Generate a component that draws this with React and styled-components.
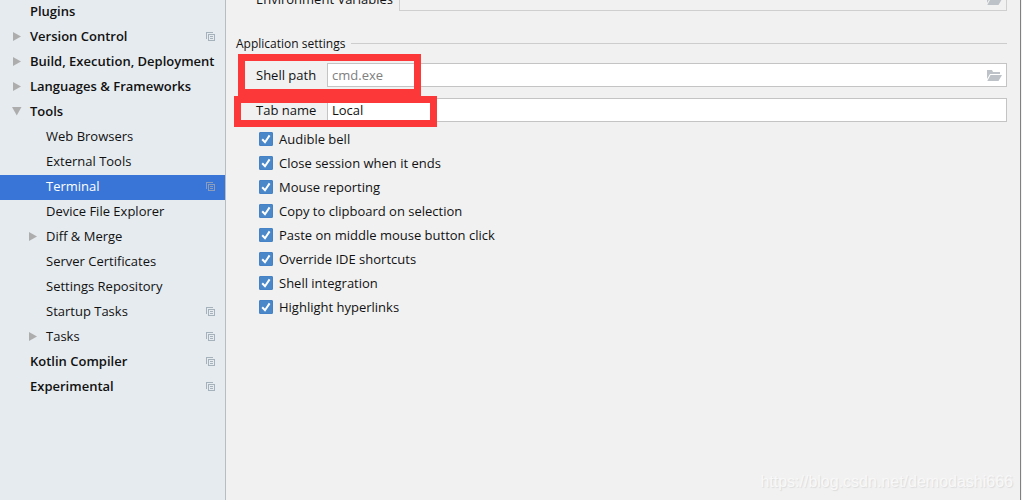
import React, { useState } from "react";
import styled, { createGlobalStyle } from "styled-components";

const GlobalStyle = createGlobalStyle`
  * {
    box-sizing: border-box;
  }
  body {
    margin: 0;
    background: #f1f1f1;
    color: #111;
    font-family: "Open Sans", "Noto Sans", sans-serif;
    font-size: 13px;
  }
  input, button {
    font: inherit;
    color: inherit;
  }
`;

// DATA

const treeItems = [
  { label: "Plugins", level: 0 },
  { label: "Version Control", level: 0, arrow: "right", copy: true },
  { label: "Build, Execution, Deployment", level: 0, arrow: "right" },
  { label: "Languages & Frameworks", level: 0, arrow: "right" },
  { label: "Tools", level: 0, arrow: "down" },
  { label: "Web Browsers", level: 1 },
  { label: "External Tools", level: 1 },
  { label: "Terminal", level: 1, copy: true },
  { label: "Device File Explorer", level: 1 },
  { label: "Diff & Merge", level: 1, arrow: "right" },
  { label: "Server Certificates", level: 1 },
  { label: "Settings Repository", level: 1 },
  { label: "Startup Tasks", level: 1, copy: true },
  { label: "Tasks", level: 1, arrow: "right", copy: true },
  { label: "Kotlin Compiler", level: 0, copy: true },
  { label: "Experimental", level: 0, copy: true }
];

const options = [
  "Audible bell",
  "Close session when it ends",
  "Mouse reporting",
  "Copy to clipboard on selection",
  "Paste on middle mouse button click",
  "Override IDE shortcuts",
  "Shell integration",
  "Highlight hyperlinks"
];

// STYLED COMPONENTS

const Window = styled.div`
  display: flex;
  min-height: 100vh;
  overflow: hidden;
`;

const Sidebar = styled.nav`
  flex: 0 0 226px;
  min-width: 0;
  background: #e6ebef;
  border-right: 1px solid #b9bdc1;
`;

const Tree = styled.ul`
  list-style: none;
  margin: 0;
  padding: 0;
`;

const TreeRow = styled.li`
  display: flex;
  align-items: center;
  height: 25px;
  padding: 0 10px 2px ${props => (props.$level ? 28 : 12)}px;
  background: ${props => (props.$selected ? "#3875d6" : "transparent")};
  color: ${props => (props.$selected ? "#fff" : "#111")};
  font-weight: ${props => (props.$level ? 400 : 600)};
  svg {
    flex: none;
  }
  a {
    flex: 1;
    min-width: 0;
    height: 23px;
    color: inherit;
    text-decoration: none;
    line-height: 22px;
    white-space: nowrap;
  }
`;

const Toggle = styled.span`
  display: flex;
  flex: 0 0 18px;
`;

const Main = styled.main`
  position: relative;
  flex: 1;
  min-width: 0;
  overflow: hidden;
  padding: 0 13px 0 10px;
  border-right: 1px solid #808080;
  margin-right: 1px;
`;

/* the project settings group is scrolled out except for its last row */
const ProjectGroup = styled.section`
  margin-top: -13px;
`;

const FieldRow = styled.div`
  display: flex;
  align-items: center;
  padding-left: 20px;
  & + & {
    margin-top: 11px;
  }
  label {
    flex: 0 0 ${props => props.$labelWidth || 71}px;
    line-height: 24px;
  }
`;

const FieldBox = styled.div`
  display: flex;
  align-items: center;
  flex: 1;
  height: 24px;
  padding: 0 4px;
  border: 1px solid ${props => (props.$disabled ? "#cfcfcf" : "#c4c4c4")};
  background: ${props => (props.$disabled ? "transparent" : "#fff")};
`;

const TextInput = styled.input`
  flex: 1;
  min-width: 0;
  height: 22px;
  padding: 0;
  border: 0;
  outline: 0;
  background: transparent;
  &::placeholder {
    color: #808080;
    opacity: 1;
  }
`;

const BrowseButton = styled.button`
  display: flex;
  padding: 0;
  border: 0;
  background: none;
`;

const GroupTitle = styled.h2`
  display: flex;
  align-items: center;
  gap: 6px;
  margin: 22px 0 9px;
  font-size: 12px;
  font-weight: 400;
  line-height: 21px;
  &::after {
    content: "";
    flex: 1;
    height: 1px;
    background: #cdcdcd;
  }
`;

const OptionList = styled.div`
  display: flex;
  flex-direction: column;
  padding: 5px 0 0 23px;
`;

const Option = styled.label`
  display: flex;
  align-items: center;
  gap: 6px;
  height: 24px;
`;

const CheckBox = styled.span`
  display: grid;
  width: 14px;
  height: 14px;
  input,
  svg {
    grid-area: 1 / 1;
  }
  input {
    appearance: none;
    width: 14px;
    height: 14px;
    margin: 0;
    border: 1px solid #b0b0b0;
    border-radius: 1px;
    background: #fff;
  }
  input:checked {
    border-color: #4583c6;
    background: #4a88c9;
  }
  input:not(:checked) + svg {
    display: none;
  }
  svg {
    pointer-events: none;
    z-index: 1;
  }
`;

const Marker = styled.div`
  position: absolute;
  left: ${props => props.$left}px;
  top: ${props => props.$top}px;
  width: ${props => props.$width}px;
  height: ${props => props.$height}px;
  border: 7px solid #fd3838;
  pointer-events: none;
`;

const Watermark = styled.div`
  position: absolute;
  right: 7px;
  bottom: 8px;
  color: #f8f8f8;
  font-family: "Liberation Sans", Arial, sans-serif;
  font-size: 16px;
  line-height: 20px;
  text-shadow: 1px 1px 1px #dcdcdc;
  pointer-events: none;
`;

// ICONS

const Arrow = ({ direction }) => (
  <svg width="10" height="9" viewBox="0 0 10 9" fill="#adadad">
    {direction === "down" ? <path d="M0 0h9.5L4.75 8.5z" /> : <path d="M1 0l8 4.5L1 9z" />}
  </svg>
);

const CopyIcon = ({ selected }) => (
  <svg width="9" height="9" viewBox="0 0 9 9" fill={selected ? "#8b9dba" : "#a5b1bb"}>
    <path d="M0 0h7v1H1v6H0z" />
    <path fillRule="evenodd" d="M2 2h7v7H2zM3 3v5h5V3z" />
    <path d="M4 4h3v1H4zM4 6h3v1H4z" />
  </svg>
);

const FolderIcon = () => (
  <svg width="15" height="11" viewBox="0 0 15 11" fill="#bcc2c7">
    <path d="M0 0h5l1 2h7v2H3L0 9z" />
    <path d="M3.5 5H15l-3.5 6H.3z" />
  </svg>
);

const CheckIcon = () => (
  <svg width="14" height="14" viewBox="0 0 14 14" fill="none" stroke="#fff" strokeWidth="2">
    <path d="M3.2 7.2l2.8 3L10.6 3.4" />
  </svg>
);

function App() {
  const [selected, setSelected] = useState("Terminal");
  const [tabName, setTabName] = useState("Local");

  return (
    <>
      <GlobalStyle />
      <Window>
        <Sidebar>
          <Tree>
            {treeItems.map(item => (
              <TreeRow
                key={item.label}
                $level={item.level}
                $selected={item.label === selected}
              >
                <Toggle>{item.arrow ? <Arrow direction={item.arrow} /> : null}</Toggle>
                <a href="#settings" onClick={() => setSelected(item.label)}>
                  {item.label}
                </a>
                {item.copy ? <CopyIcon selected={item.label === selected} /> : null}
              </TreeRow>
            ))}
          </Tree>
        </Sidebar>

        <Main>
          <ProjectGroup>
            <FieldRow $labelWidth={143}>
              <label htmlFor="env">Environment Variables</label>
              <FieldBox $disabled>
                <TextInput id="env" type="text" />
                <BrowseButton type="button" aria-label="Edit variables">
                  <FolderIcon />
                </BrowseButton>
              </FieldBox>
            </FieldRow>
          </ProjectGroup>

          <section>
            <GroupTitle>Application settings</GroupTitle>
            <FieldRow>
              <label htmlFor="shell">Shell path</label>
              <FieldBox>
                <TextInput id="shell" type="text" placeholder="cmd.exe" />
                <BrowseButton type="button" aria-label="Browse">
                  <FolderIcon />
                </BrowseButton>
              </FieldBox>
            </FieldRow>
            <FieldRow>
              <label htmlFor="tab">Tab name</label>
              <FieldBox>
                <TextInput
                  id="tab"
                  type="text"
                  value={tabName}
                  onChange={e => setTabName(e.target.value)}
                />
              </FieldBox>
            </FieldRow>
            <OptionList>
              {options.map(option => (
                <Option key={option}>
                  <CheckBox>
                    <input type="checkbox" defaultChecked />
                    <CheckIcon />
                  </CheckBox>
                  {option}
                </Option>
              ))}
            </OptionList>
          </section>

          <Marker $left={12} $top={54} $width={183} $height={42} />
          <Marker $left={8} $top={96} $width={203} $height={31} />
          <Watermark>https://blog.csdn.net/demodashi666</Watermark>
        </Main>
      </Window>
    </>
  );
}

export default App;
